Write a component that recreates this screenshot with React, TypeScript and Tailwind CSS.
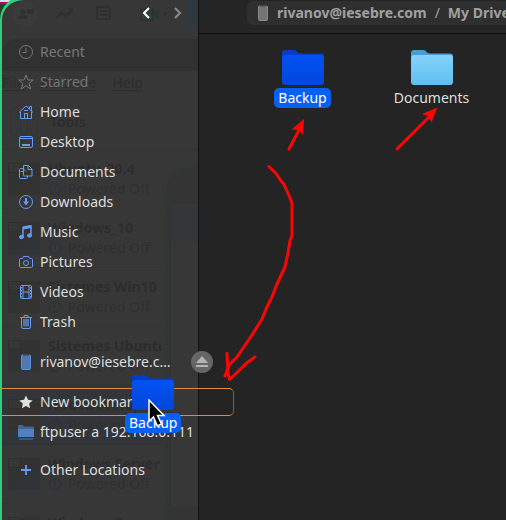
import React from "react";

type IconName =
  | "recent" | "star" | "home" | "desktop" | "documents" | "downloads" | "music"
  | "pictures" | "videos" | "trash" | "phone" | "bookmark" | "network" | "plus";

const glyphs: Record<IconName, React.ReactNode> = {
  recent: (<><circle cx="8" cy="8" r="6.5" /><path d="M8 4v4.5H4.5" /></>),
  star: <path d="M8 1l2 5h5.3l-4.2 3.3L12.6 15 8 11.6 3.4 15l1.5-5.7L.7 6H6z" />,
  home: (<><path d="M1 8.5L8 2l7 6.5M2.5 8v6.5h11V8M11.5 5V2.5h2V7" /><path d="M6.5 14V9.5h3V14" /><path d="M6 6.5h4" /></>),
  desktop: (<><rect x="1.5" y="2.5" width="13" height="11" rx="1.5" /><path d="M1.5 4.5h13" /><path d="M4 11h8" strokeWidth="2" /></>),
  documents: (<><path d="M5 4.5H2.5a1 1 0 00-1 1v8a1 1 0 001 1h6a1 1 0 001-1V12" /><path d="M5.5 1.5h5l3.500 3.500v7H6.500a1 1 0 01-1-1z" /><path d="M10 1.500V5.500h4M2.500 7.500h3M5.500 5L8 7.500" /></>),
  downloads: (<><circle cx="8" cy="8" r="6.5" /><path d="M8 4v4" strokeWidth="2" /><path d="M5 7.500h6L8 11.500z" fill="currentColor" stroke="none" /></>),
  music: (<><path d="M5 12.500V3.500l8-1.500v9" strokeWidth="1.500" /><path d="M5 4l8-1.500" strokeWidth="3" /><ellipse cx="3.500" cy="13" rx="2" ry="1.700" fill="currentColor" /><ellipse cx="11.500" cy="11.500" rx="2" ry="1.700" fill="currentColor" /></>),
  pictures: (<><path d="M4.500 4.500l1-2h5l1 2h2a1 1 0 011 1v7a1 1 0 01-1 1h-11a1 1 0 01-1-1v-7a1 1 0 011-1z" /><circle cx="8" cy="9" r="2.500" /></>),
  videos: (<><rect x="2.500" y="1.500" width="11" height="13" rx="1" /><path d="M5 1.500v13M11 1.500v13M5 8h6" /><path d="M3.500 3v11M12.500 3v11" strokeDasharray="1.500 1.500" /></>),
  trash: (<><path d="M2 3.500h12M6 3V1.500h4V3" /><path d="M3.500 3.500v9.500a1.500 1.500 0 001.500 1.500h6a1.500 1.500 0 001.500-1.500V3.500" /><rect x="5" y="5" width="6" height="7.500" fill="currentColor" fillOpacity=".6" stroke="none" /></>),
  phone: (<><rect x="3.500" y="1" width="9" height="14.500" rx="1" fill="currentColor" fillOpacity=".65" strokeOpacity=".8" /><path d="M5 1h6" stroke="#303030" /></>),
  bookmark: <path d="M8 1.500l2 4.300 4.700.6-3.500 3.200.9 4.700L8 12l-4.100 2.300.9-4.700L1.300 6.400 6 5.800z" fill="currentColor" stroke="none" />,
  network: (<><path d="M0 2a1 1 0 011-1h4l1 1.500h9a1 1 0 011 1V13H0z" fill="#45648f" stroke="none" /><path d="M0 5h16v8H0z" fill="#5380c4" stroke="none" /><path d="M1 15h14" stroke="#3c567d" strokeWidth="2" /></>),
  plus: <path d="M8 3v10M3 8h10" strokeWidth="1.800" />,
};

function Icon({ name, className }: { name: IconName; className?: string }) {
  return (
    <svg viewBox="0 0 16 16" className={`size-4 shrink-0 ${className ?? ""}`} fill="none" stroke="currentColor" strokeWidth="1" aria-hidden="true">
      {glyphs[name]}
    </svg>
  );
}

const places: { icon: IconName; label: string; dim?: boolean }[] = [
  { icon: "recent", label: "Recent", dim: true },
  { icon: "star", label: "Starred", dim: true },
  { icon: "home", label: "Home" },
  { icon: "desktop", label: "Desktop" },
  { icon: "documents", label: "Documents" },
  { icon: "downloads", label: "Downloads" },
  { icon: "music", label: "Music" },
  { icon: "pictures", label: "Pictures" },
  { icon: "videos", label: "Videos" },
  { icon: "trash", label: "Trash" },
];

function Place({ icon, label, dim, tint = "text-[#669cf5]" }: { icon: IconName; label: string; dim?: boolean; tint?: string }) {
  return (
    <button type="button" className={`flex h-[30px] w-full items-center gap-1.5 pl-[18px] text-left whitespace-nowrap ${dim ? "text-[#777]" : "text-[#dedede]"}`}>
      <Icon name={icon} className={dim ? "text-[#777]" : tint} />
      <span>{label}</span>
    </button>
  );
}

function Folder({ tone }: { tone: "blue" | "sky" }) {
  const blue = tone === "blue";
  return (
    <svg viewBox="0 0 42 35" className="h-[35px] w-[42px] shrink-0" aria-hidden="true">
      <defs>
        <linearGradient id={`face-${tone}`} x1="0" y1="0" x2="0" y2="1">
          <stop offset="0" stopColor={blue ? "#0252f4" : "#82d2fb"} />
          <stop offset="1" stopColor={blue ? "#0346da" : "#60bff0"} />
        </linearGradient>
      </defs>
      <path d="M0 3a3 3 0 013-3h9c3 0 3.500 3.500 7 3.500h20a3 3 0 013 3V20H0z" fill={blue ? "#033dc8" : "#439fd8"} />
      <rect y="5" width="42" height="30" rx="3" fill={`url(#face-${tone})`} />
    </svg>
  );
}

function FolderItem({ tone, label, selected }: { tone: "blue" | "sky"; label: string; selected?: boolean }) {
  return (
    <div className="flex flex-col items-center gap-[3px]">
      <Folder tone={tone} />
      <span className={`rounded-[5px] px-1 leading-5 ${selected ? "bg-[#0860f2] text-white" : "text-[#dedede]"}`}>{label}</span>
    </div>
  );
}

const machines = ["Ubuntu_20.4", "Windows_10", "Sistemes Win10", "Sistemes Ubuntu", "NodeDevelop", "Windows Server", "Windows Server"];

/* The window below shows faintly through the translucent sidebar. */
function Backdrop() {
  return (
    <div aria-hidden="true" className="pointer-events-none absolute inset-0 overflow-hidden rounded-tl-[20px] text-[#2d2d2d] select-none">
      <div className="flex h-[38px] items-start justify-between pl-2">
        <svg viewBox="0 0 176 28" className="h-7 w-44" fill="none" stroke="#303030" strokeWidth="2">
          <circle cx="15" cy="14" r="13" stroke="none" fill="#3a3a3a" />
          <g fill="#303030" stroke="none"><circle cx="13" cy="12" r="2.500" /><path d="M8 19c0-5 10-5 10 0zM17 9h7v5h-7z" /></g>
          <path d="M46 18l6-5 4 3 6-6M58 9h4v4M87 7h13v12H87zM90 11h8M90 15h8" />
          <path d="M131 9h12v11h-12z" fill="#303c34" />
          <path d="M143 13l6-4v11l-6-3z" fill="#26392c" stroke="none" />
          <path d="M153 13h5l-2.500 3z" fill="#303030" stroke="none" />
        </svg>
        <div className="h-7 w-3 bg-[#2f3741]" />
      </div>
      <div className="h-[33px] rounded-tl-2xl border-t border-[#333834] bg-[#313131]" />
      <div className="flex h-6 items-center gap-4 underline decoration-1 underline-offset-2"><span>File</span><span>Machine</span><span>Help</span></div>
      <div className="flex h-[54px] items-center gap-3 pl-2 font-bold">
        <div className="flex gap-0.5">
          <i className="h-7 w-2 rounded border border-[#2f353a]" /><i className="h-7 w-2 rounded border border-[#2f353a]" /><i className="h-7 w-2 rounded border border-[#2f353a]" />
        </div>
        <span>Tools</span>
      </div>
      {machines.map((m, i) => (
        <div key={i} className={`flex h-[59px] items-center gap-2 border-t border-[#333] pl-1.5 ${i === 4 ? "bg-[#32363a]" : ""}`}>
          <svg viewBox="0 0 32 32" className="size-8 shrink-0">
            <rect width="32" height="32" rx="1" fill="#323232" />
            <path d="M0 32L32 10v22z" fill={i % 2 ? "#2f3438" : "#353230"} />
            <rect x=".5" y=".5" width="12" height="9" fill="#363636" stroke="#2f2f2f" />
          </svg>
          <div className="w-[114px] shrink-0 overflow-hidden leading-5 whitespace-nowrap">
            <div className="font-bold">{m}</div>
            <div className="flex items-center gap-1.5 text-[#303030]">
              <svg viewBox="0 0 14 14" className="size-3.5 shrink-0" fill="none" stroke="#2f3438" strokeWidth="2"><circle cx="7" cy="7" r="5.500" /><path d="M7 3v5" /></svg>
              Powered Off
            </div>
          </div>
        </div>
      ))}
      <div className="absolute top-[164px] right-0 bottom-0 w-9 rounded-tl-[28px] border-t-4 border-l-4 border-[#323834] bg-[#343434]">
        <div className="mt-[34px] ml-1 h-[306px] border border-r-0 border-[#323232] bg-[#373737]"><div className="h-10 bg-[#34373a]" /></div>
      </div>
    </div>
  );
}

function Annotations() {
  return (
    <svg viewBox="0 0 506 520" className="pointer-events-none absolute top-0 left-0 h-[520px] w-[506px]" fill="none" stroke="#fd0505" strokeWidth="3" strokeLinecap="round" strokeLinejoin="round" aria-hidden="true">
      <path d="M289 149l10-19" />
      <path d="M304 119l-1 16-4.500-5-7-.5z" fill="#fd0505" stroke="none" />
      <path d="M397 149l33-33" />
      <path d="M437.500 107.500l-6 15-2.500-6-7-2.500z" fill="#fd0505" stroke="none" />
      <path d="M269 166.500l7 7 4 6 4 5 5 11 3 7.500v32l-2 6-2 12-3 14-8 17-5 13-5 10-5 12-10 16-15 22-8 8-4 11M227 353.500l1 20 1.500 6 8-7.500 9-9 8.500-6" />
    </svg>
  );
}

export default function App() {
  return (
    <div className="relative flex min-h-screen overflow-hidden bg-[#dcdcdc] font-['Noto_Sans','Open_Sans',sans-serif] text-[14px] leading-5">
      <div className="absolute top-0 left-0 h-6 w-4 border-t-2 border-[#dcdcdc] bg-[#26421f]" aria-hidden="true"><div className="h-[2px] bg-[#a01070]" /></div>
      <aside className="relative z-10 w-[199px] shrink-0">
        <div className="absolute inset-x-0 -top-1 bottom-0 rounded-tl-[24px] border-t-4 border-r border-l-2 border-t-[#2fcf7b] border-r-[#101010] border-l-[#2fcf7b] bg-[#373737]">
          <Backdrop />
        </div>
        <div className="relative">
          <header className="flex h-[26px] items-center justify-end pr-[5px]">
            <button type="button" aria-label="Back" className="flex h-6 w-8 items-center justify-center text-white">
              <svg viewBox="0 0 8 12" className="h-3 w-2" fill="none" stroke="currentColor" strokeWidth="2"><path d="M7 1L2 6l5 5" /></svg>
            </button>
            <button type="button" aria-label="Forward" className="flex h-6 w-8 items-center justify-center text-[#8a8a8a]">
              <svg viewBox="0 0 8 12" className="h-3 w-2" fill="none" stroke="currentColor" strokeWidth="2"><path d="M1 1l5 5-5 5" /></svg>
            </button>
          </header>
          <nav className="flex flex-col gap-[10px] pt-[11px]">
            <div>{places.map((p) => <Place key={p.label} {...p} />)}</div>
            <div className="relative">
              <Place icon="phone" label="rivanov@iesebre.c…" />
              <button type="button" aria-label="Eject" className="absolute top-1 left-[191px] flex size-[22px] items-center justify-center rounded-full bg-[#666]">
                <svg viewBox="0 0 12 12" className="size-3" fill="#b5b5b5"><path d="M6 0l6 7H0zM0 9h12v2H0z" /></svg>
              </button>
            </div>
            <div>
              <div className="relative">
                <div className="absolute top-px left-0.5 h-7 w-[232px] rounded-r-[5px] border-y border-r border-y-[#e38b3c] border-r-[#8a5a30]" />
                <Place icon="bookmark" label="New bookmark" tint="text-[#dedede]" />
                <div className="pointer-events-none absolute top-[-12px] left-[125px] z-10">
                  <FolderItem tone="blue" label="Backup" selected />
                  <svg viewBox="0 0 18 30" className="absolute top-6 left-[23px] h-[30px] w-[18px]" aria-hidden="true">
                    <path d="M1 1v21l4.500-4 4 9 4-2-4-8.500H16z" fill="#000" stroke="#fff" strokeWidth="1.500" />
                  </svg>
                </div>
              </div>
              <Place icon="network" label="ftpuser a 192.168.0.111" />
              <div className="pt-2"><Place icon="plus" label="Other Locations" /></div>
            </div>
          </nav>
        </div>
      </aside>
      <main className="relative min-w-0 flex-1 bg-[#242424]">
        <header className="h-[34px] border-b border-[#0c0c0c] bg-[#252525] pt-px pl-12">
          <div className="flex h-6 items-center gap-2 overflow-hidden rounded-l-md bg-[#2f2f2f] pl-2 font-bold whitespace-nowrap text-[#a0a0a0]">
            <button type="button" className="flex items-center gap-1.5"><Icon name="phone" className="text-[#999]" />rivanov@iesebre.com</button>
            <span className="font-normal">/</span>
            <button type="button">My Drive</button>
          </div>
        </header>
        <div className="grid grid-cols-[repeat(auto-fill,129px)] pt-4 pl-[39px]">
          <FolderItem tone="blue" label="Backup" selected />
          <FolderItem tone="sky" label="Documents" />
        </div>
      </main>
      <div className="pointer-events-none absolute inset-0 z-20"><Annotations /></div>
    </div>
  );
}
